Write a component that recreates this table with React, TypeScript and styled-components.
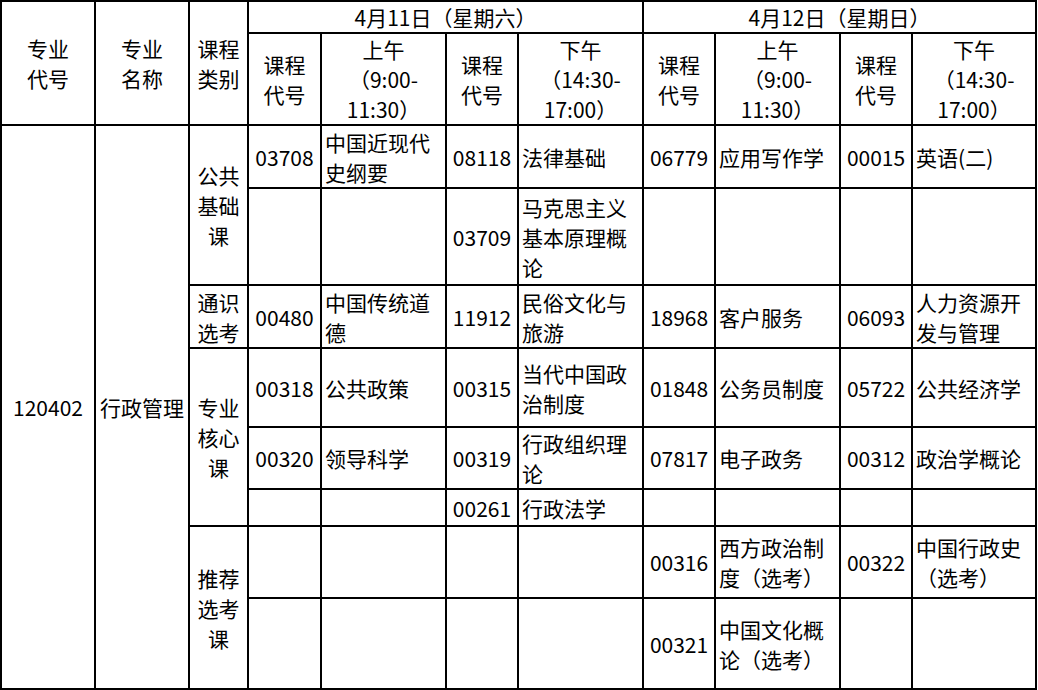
import React from 'react'
import styled, { createGlobalStyle } from 'styled-components'

const GlobalStyle = createGlobalStyle`
  html, body {
    margin: 0;
    padding: 0;
    background: #fff;
  }
  body {
    font-family: 'Noto Sans CJK SC', sans-serif;
    color: #000;
  }
`

const Table = styled.table`
  width: 1037px;
  table-layout: fixed;
  border-collapse: collapse;
  font-size: 21px;
  line-height: 30px;
  text-spacing-trim: space-all;
`

const Row = styled.tr<{ $h: number }>`
  height: ${(p) => p.$h}px;
`

const Cell = styled.td`
  border: 2px solid #000;
  padding: 0;
  vertical-align: middle;
  font-weight: 400;
`

const HeadCell = styled(Cell).attrs({ as: 'th' })`
  text-align: center;
`

const CenterCell = styled(Cell)`
  text-align: center;
`

const CodeCell = styled(Cell)`
  text-align: center;
`

const NameCell = styled(Cell)`
  text-align: left;
  padding: 0 2px 0 3px;
  word-break: break-all;
`

const widths = [94, 94, 59, 73, 125, 72, 125, 72, 125, 72, 124]

type Slot = { code?: string; name?: string }

type BodyRow = {
  h: number
  cat?: { text: string; span: number }
  slots: Slot[]
}

const rows: BodyRow[] = [
  {
    h: 63,
    cat: { text: '公共基础课', span: 2 },
    slots: [
      { code: '03708', name: '中国近现代史纲要' },
      { code: '08118', name: '法律基础' },
      { code: '06779', name: '应用写作学' },
      { code: '00015', name: '英语(二)' },
    ],
  },
  {
    h: 97,
    slots: [{}, { code: '03709', name: '马克思主义基本原理概论' }, {}, {}],
  },
  {
    h: 63,
    cat: { text: '通识选考', span: 1 },
    slots: [
      { code: '00480', name: '中国传统道德' },
      { code: '11912', name: '民俗文化与旅游' },
      { code: '18968', name: '客户服务' },
      { code: '06093', name: '人力资源开发与管理' },
    ],
  },
  {
    h: 79,
    cat: { text: '专业核心课', span: 3 },
    slots: [
      { code: '00318', name: '公共政策' },
      { code: '00315', name: '当代中国政治制度' },
      { code: '01848', name: '公务员制度' },
      { code: '05722', name: '公共经济学' },
    ],
  },
  {
    h: 61,
    slots: [
      { code: '00320', name: '领导科学' },
      { code: '00319', name: '行政组织理论' },
      { code: '07817', name: '电子政务' },
      { code: '00312', name: '政治学概论' },
    ],
  },
  {
    h: 37,
    slots: [{}, { code: '00261', name: '行政法学' }, {}, {}],
  },
  {
    h: 72,
    cat: { text: '推荐选考课', span: 2 },
    slots: [{}, {}, { code: '00316', name: '西方政治制度（选考）' }, { code: '00322', name: '中国行政史（选考）' }],
  },
  {
    h: 91,
    slots: [{}, {}, { code: '00321', name: '中国文化概论（选考）' }, {}],
  },
]

const SessionHead = ({ label, time }: { label: string; time: [string, string] }) => (
  <HeadCell>
    {label}
    <br />
    （{time[0]}
    <br />
    {time[1]}）
  </HeadCell>
)

const CodeHead = () => (
  <HeadCell>
    课程
    <br />
    代号
  </HeadCell>
)

const App = () => {
  const total = rows.length
  return (
    <>
      <GlobalStyle />
      <Table>
        <colgroup>
          {widths.map((w, i) => (
            <col key={i} style={{ width: w }} />
          ))}
        </colgroup>
        <thead>
          <Row $h={32}>
            <HeadCell rowSpan={2}>
              专业
              <br />
              代号
            </HeadCell>
            <HeadCell rowSpan={2}>
              专业
              <br />
              名称
            </HeadCell>
            <HeadCell rowSpan={2}>
              课程
              <br />
              类别
            </HeadCell>
            <HeadCell colSpan={4}>4月11日（星期六）</HeadCell>
            <HeadCell colSpan={4}>4月12日（星期日）</HeadCell>
          </Row>
          <Row $h={92}>
            <CodeHead />
            <SessionHead label="上午" time={['9:00-', '11:30']} />
            <CodeHead />
            <SessionHead label="下午" time={['14:30-', '17:00']} />
            <CodeHead />
            <SessionHead label="上午" time={['9:00-', '11:30']} />
            <CodeHead />
            <SessionHead label="下午" time={['14:30-', '17:00']} />
          </Row>
        </thead>
        <tbody>
          {rows.map((r, i) => (
            <Row $h={r.h} key={i}>
              {i === 0 && (
                <>
                  <CenterCell rowSpan={total}>120402</CenterCell>
                  <CenterCell rowSpan={total}>行政管理</CenterCell>
                </>
              )}
              {r.cat && <CenterCell rowSpan={r.cat.span}>{r.cat.text}</CenterCell>}
              {r.slots.map((s, j) => (
                <React.Fragment key={j}>
                  <CodeCell>{s.code}</CodeCell>
                  <NameCell>{s.name}</NameCell>
                </React.Fragment>
              ))}
            </Row>
          ))}
        </tbody>
      </Table>
    </>
  )
}

export default App
